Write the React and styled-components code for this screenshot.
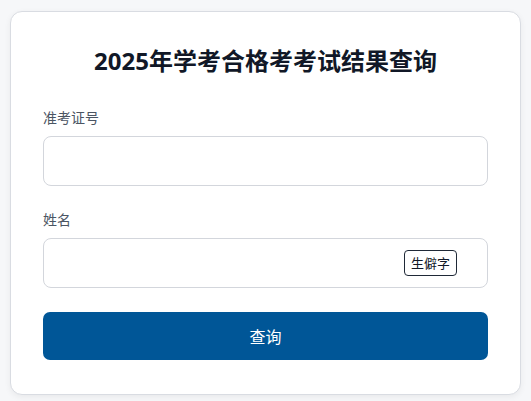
import React from 'react';
import styled, { createGlobalStyle } from 'styled-components';

const GlobalStyle = createGlobalStyle`
  * { box-sizing: border-box; }
  body {
    margin: 0;
    background: #f6f7f9;
    font-family: "Noto Sans", "Noto Sans CJK SC", sans-serif;
  }
`;

const Page = styled.div`
  padding: 11px 10px;
`;

const Card = styled.form`
  background: #fff;
  border: 1px solid #d9dce2;
  border-radius: 12px;
  padding: 31px 32px 34px;
  box-shadow: 0 2px 6px rgba(0, 0, 0, 0.06);
`;

const Title = styled.h1`
  margin: 0 0 29px;
  font-size: 24px;
  line-height: 36px;
  font-weight: 700;
  color: #111827;
  text-align: center;
`;

const Field = styled.div`
  margin-bottom: 24px;
`;

const Label = styled.label`
  display: block;
  font-size: 14px;
  line-height: 20px;
  color: #4b5563;
  margin-bottom: 8px;
`;

const InputWrap = styled.div`
  position: relative;
`;

const Input = styled.input`
  display: block;
  width: 100%;
  height: 50px;
  border: 1px solid #d3d6dc;
  border-radius: 8px;
  padding: 0 14px;
  font-size: 15px;
  font-family: inherit;
  outline: none;
  background: #fff;
`;

const RareButton = styled.button`
  position: absolute;
  right: 31px;
  top: 50%;
  transform: translateY(-50%);
  height: 26px;
  padding: 0 6px;
  border: 1px solid #1f2937;
  border-radius: 4px;
  background: #fff;
  color: #111827;
  font-size: 13px;
  font-family: inherit;
  line-height: 24px;
`;

const Submit = styled.button`
  display: block;
  width: 100%;
  height: 48px;
  border: none;
  border-radius: 7px;
  background: #005697;
  color: #fff;
  font-size: 16px;
  font-family: inherit;
`;

export default function App() {
  return (
    <Page>
      <GlobalStyle />
      <Card onSubmit={(e) => e.preventDefault()}>
        <Title>2025年学考合格考考试结果查询</Title>
        <Field>
          <Label>准考证号</Label>
          <Input type="text" />
        </Field>
        <Field>
          <Label>姓名</Label>
          <InputWrap>
            <Input type="text" />
            <RareButton type="button">生僻字</RareButton>
          </InputWrap>
        </Field>
        <Submit type="submit">查询</Submit>
      </Card>
    </Page>
  );
}
